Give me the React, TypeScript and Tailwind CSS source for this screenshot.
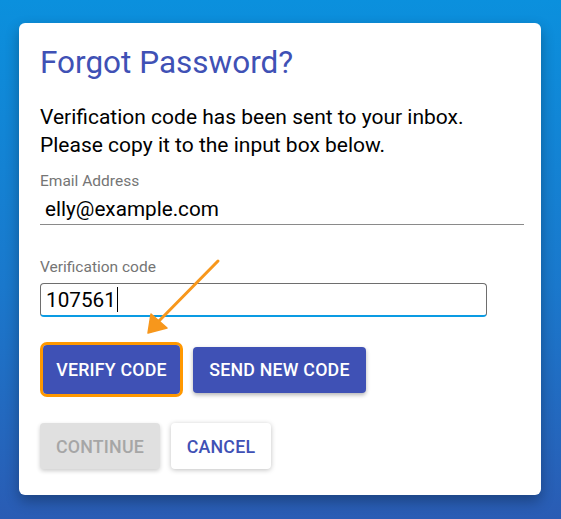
import React from "react";

export default function App() {
  return (
    <div
      className="relative w-[561px] h-[519px] overflow-hidden bg-[linear-gradient(180deg,#0b90dd_0%,#1a78cc_55%,#2a5cb4_100%)] pt-[23px] pl-[19px]"
      style={{ fontFamily: "Roboto, 'Liberation Sans', sans-serif" }}
    >
      <div className="w-[522px] h-[472px] bg-white rounded-[6px] shadow-[0_6px_14px_rgba(0,0,0,0.3)] pl-[21px] pr-[17px] pt-[20px] flex flex-col">
        <h1 className="text-[31.5px] leading-[40px] text-[#3f51b5] font-normal">Forgot Password?</h1>
        <p className="mt-[20px] text-[21px] leading-[28px] text-black">
          Verification code has been sent to your inbox.
          <br />
          Please copy it to the input box below.
        </p>
        <div className="mt-[12px] text-[15.5px] leading-[20px] text-[#757575]">Email Address</div>
        <div className="h-[34px] border-b border-[#8a8a8a] pl-[5px] pt-[3px] text-[20.7px] leading-[30px] text-black">
          elly@example.com
        </div>
        <div className="mt-[32px] text-[15.5px] leading-[20px] text-[#757575]">Verification code</div>
        <div className="mt-[6px] w-[447px] h-[34px] rounded-[4px] border border-[#6e6e6e] border-b-2 border-b-[#0a9be3] pl-[5px] text-[20.7px] leading-[30px] text-black flex items-center">
          <span>107561</span>
          <span className="inline-block w-px h-[25px] bg-black ml-[1px]" />
        </div>
        <div className="mt-[25px] flex items-center gap-[10px]">
          <div className="rounded-[7px] border-[3px] border-[#ff9800]">
            <button className="h-[49px] w-[137px] pt-[2px] rounded-[4px] bg-[#3f51b5] text-white text-[17.8px] font-medium tracking-[0.2px] uppercase flex items-center justify-center">
              Verify Code
            </button>
          </div>
          <button className="h-[46px] w-[173px] pt-[2px] rounded-[4px] bg-[#3f51b5] text-white text-[17.8px] font-medium tracking-[0.2px] uppercase shadow-[0_2px_4px_rgba(0,0,0,0.3)]">
            Send New Code
          </button>
        </div>
        <div className="mt-[26px] flex items-center gap-[11px]">
          <button className="h-[46px] w-[120px] pt-[2px] rounded-[4px] bg-[#e0e0e0] text-[#a6a6a6] text-[17.8px] font-medium tracking-[0.2px] uppercase shadow-[0_2px_4px_rgba(0,0,0,0.2)]">
            Continue
          </button>
          <button className="h-[46px] w-[100px] pt-[2px] rounded-[4px] bg-white text-[#3f51b5] text-[17.8px] font-medium tracking-[0.2px] uppercase shadow-[0_1px_5px_rgba(0,0,0,0.25)]">
            Cancel
          </button>
        </div>
      </div>
      <svg className="absolute left-0 top-0 pointer-events-none" width="561" height="519" viewBox="0 0 561 519">
        <line x1="218" y1="261" x2="156" y2="324" stroke="#f7971c" strokeWidth="3" strokeLinecap="round" />
        <polygon points="148,333 151,314 167,328" fill="#f7971c" stroke="#f7971c" strokeWidth="1.5" strokeLinejoin="round" />
      </svg>
    </div>
  );
}
